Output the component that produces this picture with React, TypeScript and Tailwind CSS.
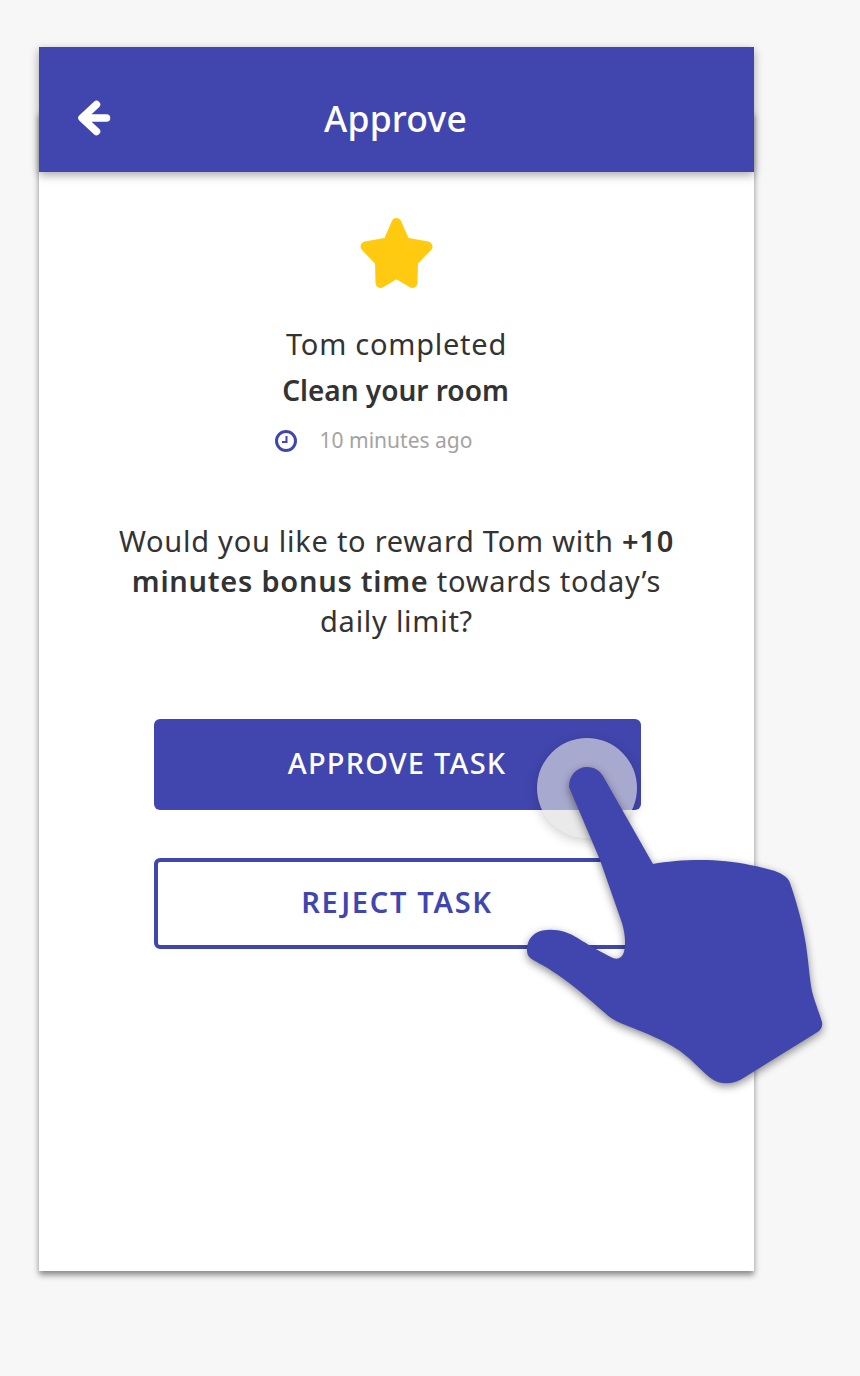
export default function App() {
  const font = "font-['Noto_Sans',sans-serif]";
  return (
    <div className={`relative w-[860px] h-[1376px] overflow-hidden bg-[#f7f7f7] pt-[47px] pl-[39px] ${font}`}>
      <div className="w-[715px] flex flex-col">
        <header className="relative z-10 h-[125px] bg-[#4146ae] shadow-[0_3px_9px_rgba(0,0,0,0.35)] flex items-center justify-center">
          <svg className="absolute left-[37px] top-[53px]" width="35" height="36" viewBox="0 0 35 36" fill="none">
            <path d="M20.5 4.5 L6 18 L20.5 31.5 M8 18 H30.5" stroke="#fff" strokeWidth="7.5" strokeLinecap="round" strokeLinejoin="round" />
          </svg>
          <h1 className="text-[35.5px] leading-none font-medium text-white pt-[18px] pr-[2px] tracking-[0.2px]">Approve</h1>
        </header>
        <main className="-mt-[61px] pt-[61px] h-[1160px] bg-white shadow-[0_4px_6px_rgba(0,0,0,0.45)] flex flex-col items-center text-[#333]">
          <svg className="mt-[46px]" width="74" height="72" viewBox="0 0 74 72">
            <path d="M36.5 5 L45 24.5 L67.5 28.5 L53 43.5 L52.5 65 L36.5 55.5 L20.5 65 L20 43.5 L5.5 28.5 L28 24.5 Z" fill="#ffca10" stroke="#ffca10" strokeWidth="10" strokeLinejoin="round" />
          </svg>
          <p className="mt-[31px] text-[29px] leading-[46px] tracking-[0.75px]">Tom completed</p>
          <p className="-ml-[2px] text-[28px] leading-[46px] font-semibold">Clean your room</p>
          <div className="mt-[11px] -ml-[47px] flex items-center h-[34px]">
            <svg width="24" height="24" viewBox="0 0 24 24" fill="none">
              <circle cx="12" cy="12" r="9.5" stroke="#4146ae" strokeWidth="3" />
              <path d="M12.5 7 V13 H8" stroke="#4146ae" strokeWidth="2" />
            </svg>
            <span className="ml-[22px] text-[21px] text-[#a3a3a3]">10 minutes ago</span>
          </div>
          <p className="mt-[63px] w-[600px] text-center text-[29px] leading-[40px] tracking-[0.74px]">
            Would you like to reward Tom with <b className="font-semibold">+10 minutes bonus time</b> towards today’s daily limit?
          </p>
          <button className="mt-[78px] ml-[1px] w-[487px] h-[91px] pb-[3px] rounded-[6px] bg-[#4146ae] text-white text-[29px] font-medium tracking-[1.2px]">APPROVE TASK</button>
          <button className="mt-[48px] ml-[1px] w-[487px] h-[91px] pb-[3px] rounded-[6px] bg-white border-[4px] border-[#4146ae] text-[#4146ae] text-[29px] font-semibold tracking-[1.7px]">REJECT TASK</button>
        </main>
      </div>
      <div className="absolute left-[537px] top-[738px] w-[100px] h-[100px] rounded-full bg-[rgba(225,222,222,0.65)] shadow-[0_3px_12px_rgba(0,0,0,0.2)]" />
      <svg className="absolute left-0 top-0 drop-shadow-[0_3px_4px_rgba(0,0,0,0.45)]" width="860" height="1376" viewBox="0 0 860 1376">
        <path
          d="M569 787 C569 775 577 767 587 767 C595 767 600 771 603 776 L653 864 C680 859 720 858 750 865 C765 868 778 871 783 875 C787 877 789 880 790 883 C797 903 803 925 806 945 C809 965 810 985 813 995 C816 1005 820 1015 822 1022 C823 1027 820 1031 816 1033 L745 1077 C735 1084 722 1086 712 1079 C704 1074 695 1062 680 1051 C662 1039 645 1033 633 1028 C620 1023 612 1020 605 1013 C590 1000 570 982 552 971 C545 966 540 964 535 961 C529 958 527 955 527 950 C527 942 530 937 536 933 C543 929 555 929 565 932 C575 935 585 944 613 958 C618 960 622 958 624 952 C626 944 625 933 622 923 L600 860 Z"
          fill="#4146ae"
        />
      </svg>
    </div>
  );
}
